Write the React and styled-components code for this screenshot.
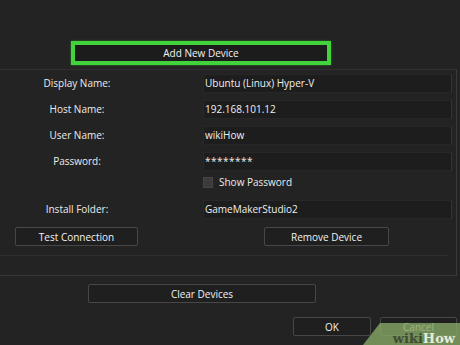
import styled, { createGlobalStyle } from "styled-components";

const Global = createGlobalStyle`
  html, body {
    margin: 0;
    padding: 0;
    background: #232323;
  }
  body {
    font-family: "Open Sans", "Noto Sans", sans-serif;
    color: #eaeaea;
  }
`;

const Screen = styled.div`
  position: relative;
  width: 460px;
  height: 345px;
  overflow: hidden;
  background: #232323;
  padding-top: 41px;
  box-sizing: border-box;
`;

const Highlight = styled.div`
  margin-left: 71px;
  width: 260px;
  height: 24px;
  box-sizing: border-box;
  border: 4px solid #41d23c;
  box-shadow: 0 0 2px #2a8a27;
  background: #1c1c1c;
  display: flex;
  align-items: center;
  justify-content: center;
  font-size: 10px;
  color: #f2f2f2;
`;

const Panel = styled.div`
  margin-top: 4px;
  width: 457px;
  height: 207px;
  box-sizing: border-box;
  border-top: 1px solid #303030;
  border-right: 1px solid #3a3a3a;
  border-bottom: 1px solid #383838;
  display: flex;
  flex-direction: column;
`;

const Row = styled.div`
  display: grid;
  grid-template-columns: 154px 1fr;
  column-gap: 49px;
  align-items: center;
  height: ${({ $h }) => $h || 26}px;
  margin-top: ${({ $mt }) => $mt || 0}px;
  padding-right: 4px;
`;

const Label = styled.div`
  text-align: center;
  font-size: 10px;
  color: #ececec;
`;

const Field = styled.div`
  height: 19px;
  box-sizing: border-box;
  background: #1d1d1d;
  border: 1px solid #272727;
  border-right-color: #353535;
  display: flex;
  align-items: center;
  padding-left: 1px;
  font-size: 10px;
  color: #f0f0f0;
  letter-spacing: ${({ $dots }) => ($dots ? "0.5px" : "0")};
`;

const CheckWrap = styled.label`
  display: flex;
  align-items: center;
  gap: 6px;
  font-size: 10px;
  color: #ececec;
`;

const Box = styled.span`
  width: 10px;
  height: 11px;
  background: #3b3b3b;
  border: 1px solid #444;
  box-sizing: border-box;
`;

const ButtonRow = styled.div`
  display: flex;
  align-items: center;
  margin-top: 5px;
  padding-left: 15px;
  gap: 126px;
`;

const Button = styled.button`
  width: ${({ $w }) => $w}px;
  height: 19px;
  padding: 0;
  box-sizing: border-box;
  background: #1f1f1f;
  border: 1px solid #474747;
  border-radius: 2px;
  font-family: inherit;
  font-size: 10px;
  color: #f2f2f2;
`;

const Separator = styled.div`
  margin-top: 9px;
  margin-right: 7px;
  height: 1px;
  background: #2e2e2e;
`;

const Center = styled.div`
  display: flex;
  margin-top: 8px;
  padding-left: 88px;
`;

const Footer = styled.div`
  display: flex;
  gap: 9px;
  margin-top: 14px;
  padding-left: 293px;
`;

const Watermark = styled.div`
  position: absolute;
  right: 0;
  bottom: 0;
  width: 97px;
  height: 22px;
  background: rgba(133, 165, 101, 0.82);
  clip-path: polygon(17px 0, 100% 0, 100% 100%, 0 100%);
  display: flex;
  align-items: flex-end;
  justify-content: flex-end;
  padding-right: 5px;
  box-sizing: border-box;
  font-family: "DejaVu Serif", "Liberation Serif", serif;
  font-weight: bold;
  font-size: 13px;
  line-height: 13px;
`;

const Wiki = styled.span`
  color: #3d4c33;
`;

const How = styled.span`
  color: #e6ecd9;
`;

const fields = [
  ["Display Name:", "Ubuntu (Linux) Hyper-V"],
  ["Host Name:", "192.168.101.12"],
  ["User Name:", "wikiHow"],
  ["Password:", "********"],
];

export default function App() {
  return (
    <Screen>
      <Global />
      <Highlight>Add New Device</Highlight>
      <Panel>
        {fields.map(([label, value]) => (
          <Row key={label}>
            <Label>{label}</Label>
            <Field $dots={label === "Password:"}>{value}</Field>
          </Row>
        ))}
        <Row $h={16}>
          <span />
          <CheckWrap>
            <Box />
            Show Password
          </CheckWrap>
        </Row>
        <Row $mt={6}>
          <Label>Install Folder:</Label>
          <Field>GameMakerStudio2</Field>
        </Row>
        <ButtonRow>
          <Button $w={123}>Test Connection</Button>
          <Button $w={125}>Remove Device</Button>
        </ButtonRow>
        <Separator />
      </Panel>
      <Center>
        <Button $w={228}>Clear Devices</Button>
      </Center>
      <Footer>
        <Button $w={78}>OK</Button>
        <Button $w={77}>Cancel</Button>
      </Footer>
      <Watermark>
        <Wiki>wiki</Wiki>
        <How>How</How>
      </Watermark>
    </Screen>
  );
}
